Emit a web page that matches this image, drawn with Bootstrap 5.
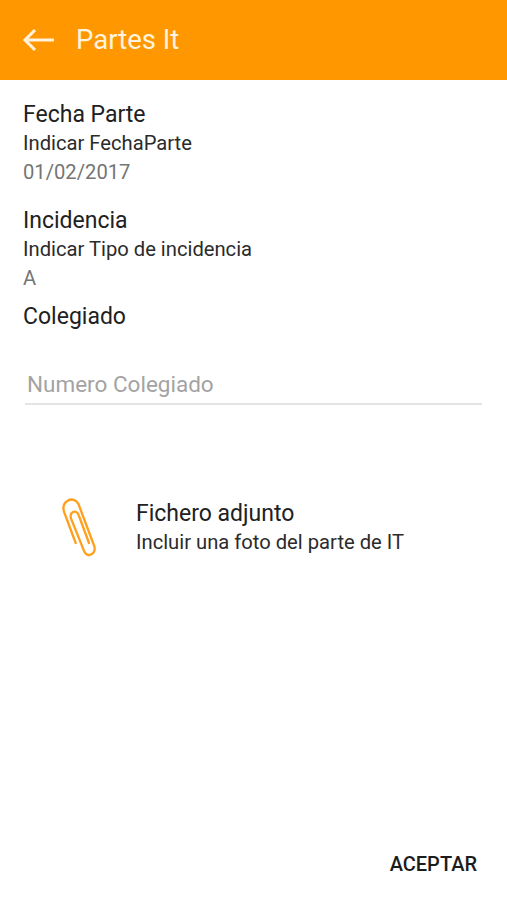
<!DOCTYPE html>
<html lang="es">
<head>
<meta charset="utf-8">
<meta name="viewport" content="width=device-width, initial-scale=1">
<link href="https://cdn.jsdelivr.net/npm/bootstrap@5.3.0/dist/css/bootstrap.min.css" rel="stylesheet">
<style>
html,body{height:100%}
body{font-family:Roboto,"Liberation Sans",sans-serif;background:#fff;color:#212121}
.shell{height:900px;width:507px}
.appbar{height:80px;background:#ff9800;padding-left:22px}
.appbar svg{width:32px;height:24px;display:block}
.apptitle{font-size:27.5px;line-height:32px;color:#fff3df;margin-left:22px}
.formarea{padding:21px 23px 0}
.ttl{font-size:23px;line-height:28px;color:#212121}
.sub{font-size:20.2px;line-height:28px;color:#2b2b2b}
.val{font-size:20.2px;line-height:26px;color:#757575;margin-top:2px}
.blk{height:106px}
.blk2{height:96px}
.inputwrap{margin:39px 2px 0;border-bottom:2px solid #e4e4e4;height:35px}
.inputwrap input{border:0;outline:0;padding:0 0 0 2px;width:100%;font-size:22.5px;height:30px;color:#212121;background:transparent;font-family:inherit;display:block}
.inputwrap input::placeholder{color:#a3a3a3;opacity:1}
.attach{margin-top:89px;padding-left:32px}
.attach svg{width:50px;height:68px;display:block;flex:none}
.attachtxt{margin-left:31px}
.okbtn{font-size:20px;font-weight:500;color:#1c1c1c;line-height:24px;padding:0;border:0;background:none;font-family:inherit}
.footrow{padding:0 30px 24px 0}
</style>
</head>
<body>
<div class="shell d-flex flex-column">
  <div class="appbar d-flex align-items-center">
    <svg viewBox="0 0 32 24" fill="none" stroke="#fff3df" stroke-width="3" aria-hidden="true"><path d="M32 12H3M13 2 3 12l10 10"/></svg>
    <div class="apptitle">Partes It</div>
  </div>
  <div class="formarea flex-grow-1">
    <div class="blk">
      <div class="ttl">Fecha Parte</div>
      <div class="sub">Indicar FechaParte</div>
      <div class="val">01/02/2017</div>
    </div>
    <div class="blk2">
      <div class="ttl">Incidencia</div>
      <div class="sub">Indicar Tipo de incidencia</div>
      <div class="val">A</div>
    </div>
    <div class="ttl">Colegiado</div>
    <div class="inputwrap"><input type="text" placeholder="Numero Colegiado"></div>
    <div class="attach d-flex align-items-center">
      <svg viewBox="0 3 150 204" fill="none" stroke="#ff9f1c" stroke-width="7" stroke-linecap="round" aria-hidden="true"><path d="M62 150 27 56C23 42 26 30 38 23 50 16 64 20 70 32L118 160C122 174 114 185 102 186 94 187 88 178 84 166L48 76C44 62 52 56 60 56 66 56 70 62 73 72L102 150"/></svg>
      <div class="attachtxt">
        <div class="ttl">Fichero adjunto</div>
        <div class="sub">Incluir una foto del parte de IT</div>
      </div>
    </div>
  </div>
  <div class="footrow d-flex justify-content-end">
    <button type="button" class="okbtn">ACEPTAR</button>
  </div>
</div>
<script src="https://cdn.jsdelivr.net/npm/bootstrap@5.3.0/dist/js/bootstrap.bundle.min.js"></script>
</body>
</html>
